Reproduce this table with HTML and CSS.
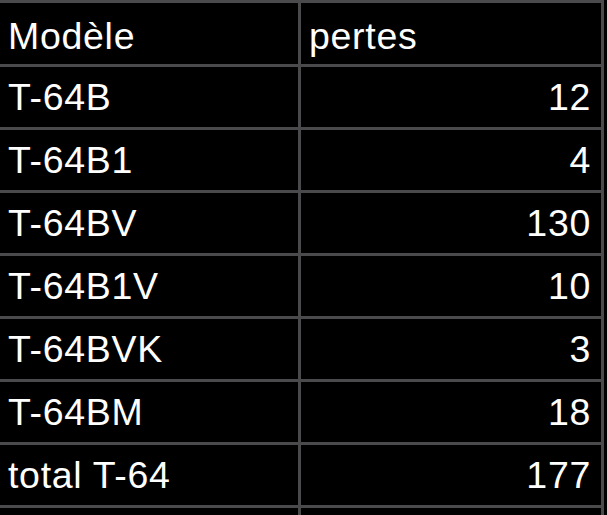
FILE: index.html
```html
<!DOCTYPE html>
<html lang="fr">
<head>
<meta charset="utf-8">
<title>pertes T-64</title>
<link rel="stylesheet" href="styles.css">
</head>
<body>
<div class="sheet">
  <div class="cell head">Modèle</div>
  <div class="cell head">pertes</div>
  <div class="cell">T-64B</div>
  <div class="cell num">12</div>
  <div class="cell">T-64B1</div>
  <div class="cell num">4</div>
  <div class="cell">T-64BV</div>
  <div class="cell num">130</div>
  <div class="cell">T-64B1V</div>
  <div class="cell num">10</div>
  <div class="cell">T-64BVK</div>
  <div class="cell num">3</div>
  <div class="cell">T-64BM</div>
  <div class="cell num">18</div>
  <div class="cell">total T-64</div>
  <div class="cell num">177</div>
  <div class="cell tail"></div>
  <div class="cell tail"></div>
</div>
</body>
</html>
```

FILE: styles.css
```css
html, body {
  margin: 0;
  padding: 0;
  background: #000;
  overflow: hidden;
}

.sheet {
  display: grid;
  grid-template-columns: 298px 300px;
  grid-template-rows: 61px repeat(7, 60px) 7px;
  gap: 3px;
  padding: 3px 3px 0 0;
  width: 601px;
  background: #4a4a4c;
  font-family: "Liberation Sans", Arial, Helvetica, sans-serif;
  font-size: 37.5px;
  letter-spacing: 0.7px;
  color: #fff;
}

.cell {
  background: #000;
  line-height: 60px;
  padding: 0 10px 0 8px;
  white-space: nowrap;
  overflow: hidden;
}

.head {
  line-height: 55px;
  padding-top: 6px;
}

.tail {
  line-height: 7px;
}

.num {
  text-align: right;
}
```
